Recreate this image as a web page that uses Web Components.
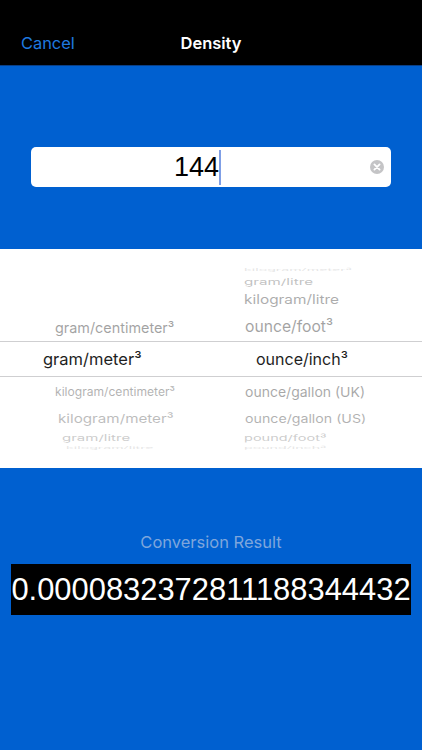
<!DOCTYPE html>
<html>
<head>
<meta charset="utf-8">
<title>Density</title>
<style>
  html, body { margin: 0; height: 100%; background: #0060d0; }
  body { font-family: "Inter", "Liberation Sans", sans-serif; }
</style>
</head>
<body>
<density-screen>
  <nav-bar slot="nav" action="Cancel">Density</nav-bar>
  <value-field slot="field">144</value-field>
  <unit-picker slot="picker">
    <wheel-column style="--top:63px" >
      <wheel-row h="30" x="55" size="14.4" sy="1" op=".36">gram/centimeter³</wheel-row>
      <wheel-row h="34" x="43" size="16.5" sy="1" op=".88" picked>gram/meter³</wheel-row>
      <wheel-row h="30" x="55" size="12.1" sy=".95" op=".3">kilogram/centimeter³</wheel-row>
      <wheel-row h="24" x="58" size="15.2" sy=".8" op=".26">kilogram/meter³</wheel-row>
      <wheel-row h="14" x="62" size="15" sy=".55" op=".2">gram/litre</wheel-row>
      <wheel-row h="6" x="66" size="14.2" sy=".25" op=".1">kilogram/litre</wheel-row>
    </wheel-column>
    <wheel-column style="--top:16px">
      <wheel-row h="9" x="33" size="14.2" sy=".25" op=".1">kilogram/meter³</wheel-row>
      <wheel-row h="14" x="33" size="15.2" sy=".55" op=".24">gram/litre</wheel-row>
      <wheel-row h="23" x="33" size="15.4" sy=".82" op=".32">kilogram/litre</wheel-row>
      <wheel-row h="31" x="34" size="15.7" sy="1" op=".36">ounce/foot³</wheel-row>
      <wheel-row h="34" x="45" size="16" sy="1" op=".88" picked>ounce/inch³</wheel-row>
      <wheel-row h="30" x="34" size="14" sy=".98" op=".34">ounce/gallon (UK)</wheel-row>
      <wheel-row h="24" x="34" size="14.2" sy=".8" op=".3">ounce/gallon (US)</wheel-row>
      <wheel-row h="14" x="33" size="14.5" sy=".55" op=".2">pound/foot³</wheel-row>
      <wheel-row h="6" x="33" size="14.2" sy=".25" op=".1">pound/inch³</wheel-row>
    </wheel-column>
  </unit-picker>
  <conversion-result slot="result" label="Conversion Result">0.0000832372811188344432</conversion-result>
</density-screen>

<script>
// page frame, everything goes in by slot
class DensityScreen extends HTMLElement {
  constructor() {
    super();
    this.attachShadow({mode: 'open'});
    this.shadowRoot.innerHTML = `
      <style>
        :host { display: flex; flex-direction: column; width: 422px; height: 750px; background: #0060d0; overflow: hidden; }
        .field { display: block; padding: 81px 31px 62px; }
        .result { display: block; padding-top: 64px; }
      </style>
      <slot name="nav"></slot>
      <div class="field"><slot name="field"></slot></div>
      <slot name="picker"></slot>
      <div class="result"><slot name="result"></slot></div>
    `;
  }
}

class NavBar extends HTMLElement {
  constructor() {
    super();
    this.attachShadow({mode: 'open'});
    this.shadowRoot.innerHTML = `
      <style>
        :host { display: grid; grid-template-columns: 1fr auto 1fr; align-items: center; height: 66px; padding: 21px 21px 0; box-sizing: border-box; background: #000; border-bottom: 1px solid #0a3f86; }
        .action { color: #1f7ae0; font-size: 16.4px; }
        .title { color: #fff; font-size: 16.5px; font-weight: 600; }
      </style>
      <span class="action"></span>
      <span class="title"><slot></slot></span>
    `;
    this.shadowRoot.querySelector('.action').textContent = this.getAttribute('action');
  }
}

class ValueField extends HTMLElement {
  constructor() {
    super();
    this.attachShadow({mode: 'open'});
    this.shadowRoot.innerHTML = `
      <style>
        :host { display: flex; align-items: center; justify-content: center; position: relative; width: 360px; height: 40px; padding-right: 27px; box-sizing: border-box; background: #fff; border-radius: 5px; font-family: "Liberation Sans", sans-serif; }
        .text { display: flex; align-items: center; font-size: 27px; color: #000; padding-top: 1px; }
        .caret { width: 2px; height: 35px; margin-top: -1px; background: #7f9fe6; }
        svg { position: absolute; right: 7px; top: 13px; }
      </style>
      <span class="text"><slot></slot><span class="caret"></span></span>
      <svg width="14" height="14" viewBox="0 0 14 14">
        <circle cx="7" cy="7" r="7" fill="#c4c4c6"/>
        <path d="M4.4 4.4l5.2 5.2M9.6 4.4l-5.2 5.2" stroke="#fff" stroke-width="1.8" stroke-linecap="round"/>
      </svg>
    `;
  }
}

class UnitPicker extends HTMLElement {
  constructor() {
    super();
    this.attachShadow({mode: 'open'});
    this.shadowRoot.innerHTML = `
      <style>
        :host { display: grid; grid-template-columns: 211px 211px; position: relative; height: 219px; background: #fff; overflow: hidden; }
        .band { position: absolute; left: 0; right: 0; top: 92px; height: 34px; border-top: 1px solid #cfcfd1; border-bottom: 1px solid #cfcfd1; }
      </style>
      <slot></slot>
      <div class="band"></div>
    `;
  }
}

class WheelColumn extends HTMLElement {
  constructor() {
    super();
    this.attachShadow({mode: 'open'});
    this.shadowRoot.innerHTML = `
      <style>
        :host { display: flex; flex-direction: column; padding-top: var(--top, 0); }
      </style>
      <slot></slot>
    `;
  }
}

// one line on the wheel, squashed by sy the way the drum squashes it
class WheelRow extends HTMLElement {
  constructor() {
    super();
    this.attachShadow({mode: 'open'});
    const h = this.getAttribute('h');
    const x = this.getAttribute('x');
    const size = this.getAttribute('size');
    const sy = this.getAttribute('sy');
    const op = this.getAttribute('op');
    this.shadowRoot.innerHTML = `
      <style>
        :host { display: flex; align-items: center; height: ${h}px; padding-left: ${x}px; font-size: ${size}px; white-space: nowrap; color: #000; }
        span { display: block; transform: scaleY(${sy}); transform-origin: left center; opacity: ${op}; }
      </style>
      <span><slot></slot></span>
    `;
  }
}

class ConversionResult extends HTMLElement {
  constructor() {
    super();
    this.attachShadow({mode: 'open'});
    this.shadowRoot.innerHTML = `
      <style>
        :host { display: flex; flex-direction: column; align-items: center; gap: 12px; }
        .label { color: #7ea6dc; font-size: 16.5px; line-height: 20px; }
        .value { width: 400px; height: 51px; display: flex; align-items: center; justify-content: center; background: #000; color: #fff; font-family: "Liberation Sans", sans-serif; font-size: 30.9px; white-space: nowrap; }
      </style>
      <div class="label"></div>
      <div class="value"><slot></slot></div>
    `;
    this.shadowRoot.querySelector('.label').textContent = this.getAttribute('label');
  }
}

customElements.define('density-screen', DensityScreen);
customElements.define('nav-bar', NavBar);
customElements.define('value-field', ValueField);
customElements.define('unit-picker', UnitPicker);
customElements.define('wheel-column', WheelColumn);
customElements.define('wheel-row', WheelRow);
customElements.define('conversion-result', ConversionResult);
</script>
</body>
</html>
